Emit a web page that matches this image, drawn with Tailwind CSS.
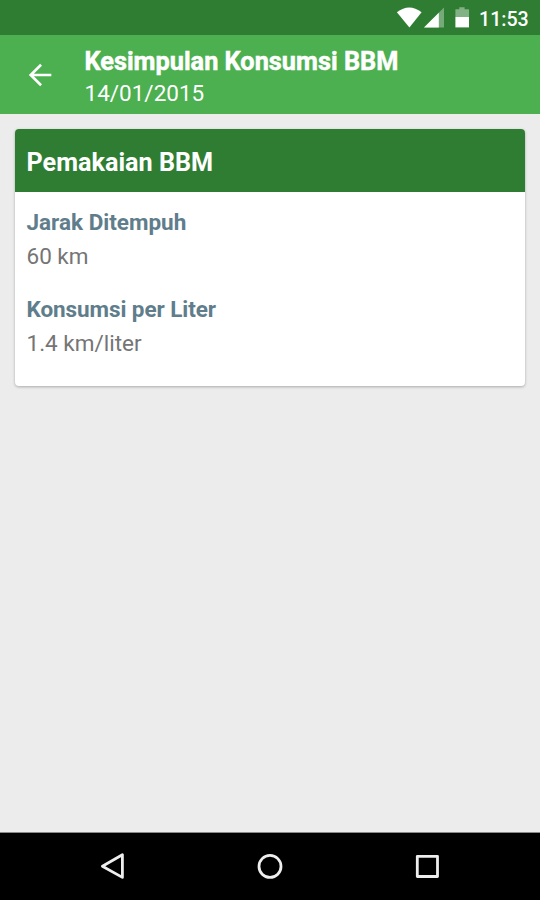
<!DOCTYPE html>
<html lang="id">
<head>
  <meta charset="UTF-8">
  <meta name="viewport" content="width=device-width, initial-scale=1.0">
  <title>Kesimpulan Konsumsi BBM</title>
  <script src="https://cdn.jsdelivr.net/npm/@tailwindcss/browser@4"></script>
</head>
<body class="h-screen bg-[#ececec] flex flex-col overflow-hidden font-['Roboto','Liberation_Sans',sans-serif]">

  <!-- Status bar -->
  <div class="h-[35px] shrink-0 bg-[#2e7d32] flex items-center justify-end pr-[11.5px] text-white">
    <svg class="w-[26px] h-[35px]" viewBox="396 0 26 35" fill="currentColor">
      <path d="M396.9 12.2 Q409.2 2.6 421.6 12.2 L409.4 27.4 Z"/>
    </svg>
    <svg class="w-[23px] h-[35px]" viewBox="422 0 23 35" fill="currentColor">
      <path d="M444 7.5 V27.6 H424 Z" opacity=".35"/>
      <path d="M438.8 12.8 V27.6 H424 Z"/>
    </svg>
    <svg class="w-[14px] h-[35px] ml-[10px]" viewBox="455 0 14 35" fill="currentColor">
      <path d="M459.3 7.2 H464.6 V9.2 H469 V17 H455.4 V9.2 H459.3 Z" opacity=".4"/>
      <path d="M455.4 17 H469 V27.4 H455.4 Z"/>
    </svg>
    <span class="w-[49.5px] ml-[10px] pt-[4px] text-[19.6px] leading-[20px] font-medium">11:53</span>
  </div>

  <!-- App bar -->
  <header class="h-[79px] shrink-0 bg-[#4caf50] flex items-center text-white">
    <svg class="w-[34px] h-[34px] ml-[22.5px]" viewBox="0 0 24 24" fill="currentColor">
      <path d="M20 11.1H7.7l5.7-5.7L12.1 4.1 4.1 12l8 7.9 1.3-1.3-5.7-5.7H20z"/>
    </svg>
    <div class="ml-[28px] pt-[5px]">
      <h1 class="text-[25.3px] leading-[32px] font-bold [-webkit-text-stroke:0.5px_white]">Kesimpulan Konsumsi BBM</h1>
      <p class="text-[22.5px] leading-[31px]">14/01/2015</p>
    </div>
  </header>

  <!-- Content -->
  <main class="flex-1 px-[15px] pt-[15px]">
    <section class="bg-white rounded-[4px] overflow-hidden shadow-[0_1px_3px_rgba(0,0,0,0.28)]">
      <h2 class="h-[63px] pt-[4px] px-[11.5px] bg-[#2e7d32] text-white text-[25.2px] font-bold flex items-center">Pemakaian BBM</h2>
      <dl class="px-[11.5px] pt-[13px] pb-[26px] text-[22.5px] leading-[34px]">
        <dt class="font-bold text-[#607d8b]">Jarak Ditempuh</dt>
        <dd class="text-[#757575]">60 km</dd>
        <dt class="mt-[19px] font-bold text-[#607d8b] tracking-[-0.08px]">Konsumsi per Liter</dt>
        <dd class="text-[#757575]">1.4 km/liter</dd>
      </dl>
    </section>
  </main>

  <!-- Navigation bar -->
  <nav class="h-[68px] shrink-0 bg-black border-t border-[#8a8a8a] text-[#eeeeee]">
    <svg class="w-full h-[67px]" viewBox="0 833 540 67" fill="none" stroke="currentColor" stroke-width="2.8" stroke-linejoin="round">
      <path d="M122.4 854.8 V877.4 L102.4 866.2 Z"/>
      <circle cx="270" cy="866.4" r="11"/>
      <rect x="417.3" y="856.3" width="20.2" height="20.2"/>
    </svg>
  </nav>

</body>
</html>
